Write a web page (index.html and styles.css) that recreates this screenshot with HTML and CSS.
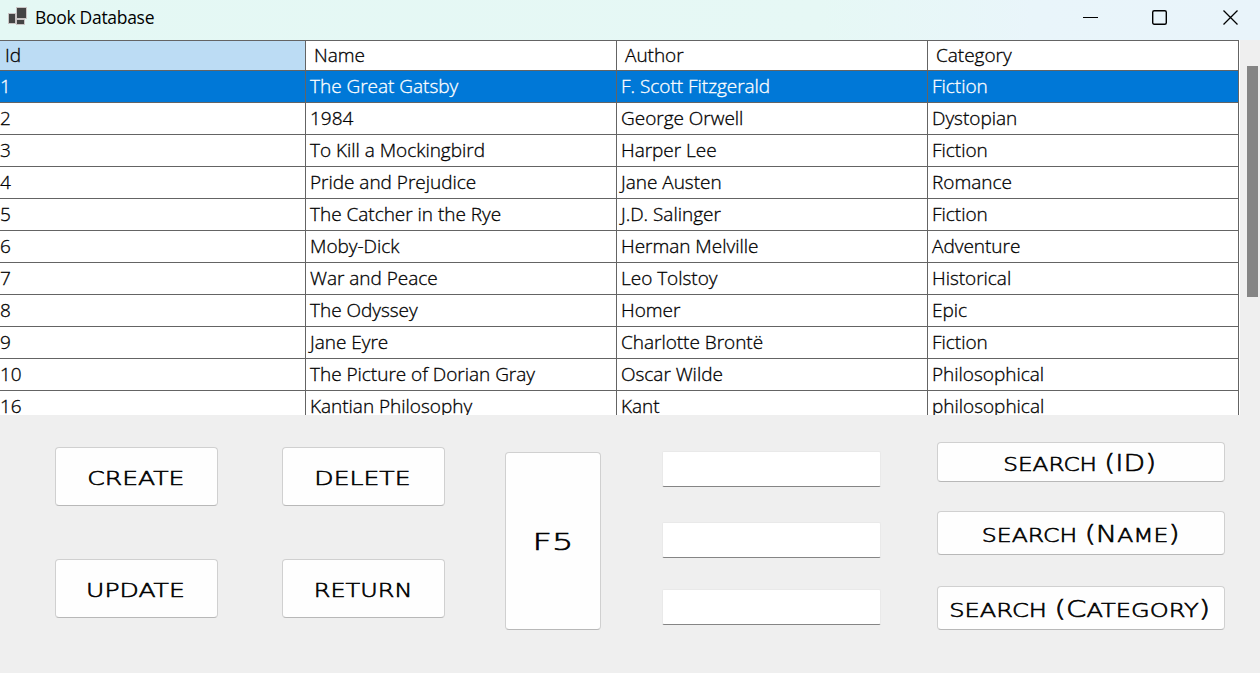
FILE: index.html
```html
<!DOCTYPE html>
<html lang="en">
<head>
<meta charset="utf-8">
<title>Book Database</title>
<link rel="stylesheet" href="styles.css">
</head>
<body>
<div class="window">
  <header class="titlebar">
    <svg class="app-icon" width="20" height="20" viewBox="0 0 20 20">
      <g fill="#444" stroke="#c9c4c4" stroke-width="1">
        <rect x="0.5" y="5.5" width="7" height="10"/>
        <rect x="8.5" y="11.500" width="8" height="5"/>
        <rect x="8.500" y="-0.5" width="10" height="11"/>
      </g>
    </svg>
    <h1 class="title">Book Database</h1>
    <div class="controls">
      <svg width="16" height="16" viewBox="0 0 16 16"><path d="M0 8.500H15" stroke="#000" fill="none"/></svg>
      <svg width="16" height="16" viewBox="0 0 16 16"><rect x="0.700" y="1.700" width="13.600" height="13.600" rx="1.500" stroke="#000" stroke-width="1.400" fill="none"/></svg>
      <svg width="16" height="16" viewBox="0 0 16 16"><path d="M0.500 1.500L14.500 15.500M14.500 1.500L0.500 15.500" stroke="#000" stroke-width="1.300" fill="none"/></svg>
    </div>
  </header>

  <main class="grid-area">
    <div class="table">
      <div class="row head"><div class="active">Id</div><div>Name</div><div>Author</div><div>Category</div></div>
      <div class="row selected"><div>1</div><div>The Great Gatsby</div><div>F. Scott Fitzgerald</div><div>Fiction</div></div>
      <div class="row"><div>2</div><div>1984</div><div>George Orwell</div><div>Dystopian</div></div>
      <div class="row"><div>3</div><div>To Kill a Mockingbird</div><div>Harper Lee</div><div>Fiction</div></div>
      <div class="row"><div>4</div><div>Pride and Prejudice</div><div>Jane Austen</div><div>Romance</div></div>
      <div class="row"><div>5</div><div>The Catcher in the Rye</div><div>J.D. Salinger</div><div>Fiction</div></div>
      <div class="row"><div>6</div><div>Moby-Dick</div><div>Herman Melville</div><div>Adventure</div></div>
      <div class="row"><div>7</div><div>War and Peace</div><div>Leo Tolstoy</div><div>Historical</div></div>
      <div class="row"><div>8</div><div>The Odyssey</div><div>Homer</div><div>Epic</div></div>
      <div class="row"><div>9</div><div>Jane Eyre</div><div>Charlotte Brontë</div><div>Fiction</div></div>
      <div class="row"><div>10</div><div>The Picture of Dorian Gray</div><div>Oscar Wilde</div><div>Philosophical</div></div>
      <div class="row"><div>16</div><div>Kantian Philosophy</div><div>Kant</div><div>philosophical</div></div>
    </div>
    <div class="scrollbar"><div class="thumb"></div></div>
  </main>

  <section class="panel">
    <div class="actions">
      <button class="btn"><span class="label wide">CREATE</span></button>
      <button class="btn"><span class="label wide">DELETE</span></button>
      <button class="btn"><span class="label wide">UPDATE</span></button>
      <button class="btn"><span class="label">RETURN</span></button>
    </div>
    <button class="btn refresh"><span class="label wide big">F5</span></button>
    <div class="fields">
      <input class="field" type="text" aria-label="Id">
      <input class="field" type="text" aria-label="Name">
      <input class="field" type="text" aria-label="Category">
    </div>
    <div class="searches">
      <button class="btn by-id"><span class="label">SEARCH <span class="big">(ID)</span></span></button>
      <button class="btn by-name"><span class="label">SEARCH <span class="big">(N</span>AME<span class="big">)</span></span></button>
      <button class="btn by-category"><span class="label">SEARCH <span class="big">(C</span>ATEGORY<span class="big">)</span></span></button>
    </div>
  </section>
</div>
</body>
</html>
```

FILE: styles.css
```css
* { box-sizing: border-box; }

body {
  margin: 0;
  background: #efefef;
  color: #000;
  font-family: "Open Sans", "Noto Sans", sans-serif;
}

.window {
  width: 1260px;
  height: 673px;
  overflow: hidden;
  display: flex;
  flex-direction: column;
}

.titlebar {
  height: 40px;
  flex: none;
  display: flex;
  align-items: center;
  padding: 0 21px 4px 8px;
  background: linear-gradient(90deg, #e4f8f4 0%, #e6f8f5 65%, #e9f5fa 82%, #e9f4fa 100%);
}

.app-icon { overflow: visible; }

.title {
  margin: -2px 0 0 7px;
  font-size: 17.5px;
  font-weight: 400;
  letter-spacing: -0.3px;
  line-height: 24px;
}

.controls {
  margin: -2px 0 0 auto;
  display: flex;
  gap: 53px;
}
.controls svg:last-child { margin-left: 2px; }

.grid-area {
  height: 375px;
  flex: none;
  display: flex;
  overflow: hidden;
}

.table {
  width: 1240px;
  background: linear-gradient(#646464, #646464) 0 0 / 1239px 1px no-repeat #fff;
  padding-top: 1px;
}

.row {
  display: grid;
  grid-template-columns: 306px 311px 311px 311px;
  width: 1239px;
  height: 32px;
}

.row > div {
  border-right: 1px solid #646464;
  border-bottom: 1px solid #646464;
  padding-left: 4px;
  font-size: 19px;
  font-weight: 300;
  line-height: 31px;
  letter-spacing: -0.02px;
  -webkit-text-stroke: 0.3px currentColor;
  white-space: nowrap;
}

.row > div:first-child { padding-left: 0; }

.head { height: 30px; }
.row.head > div { padding-left: 8px; line-height: 29px; }
.row.head > .active { padding-left: 5px; background: #bcdcf4; }

.selected { background: #0078d7; color: #fff; }

.scrollbar { width: 20px; padding: 26px 2px 0 7px; }
.thumb { width: 11px; height: 231px; background: #858585; }

.panel {
  flex: 1;
  display: flex;
  align-items: flex-start;
  padding: 27px 35px 0 55px;
}

.actions {
  display: grid;
  grid-template-columns: 163px 163px;
  grid-auto-rows: 59px;
  gap: 53px 64px;
  margin-top: 5px;
}

.btn {
  display: flex;
  align-items: center;
  justify-content: center;
  padding: 0;
  border: 1px solid #d0d0d0;
  border-bottom-color: #b8b8b8;
  border-radius: 4px;
  background: #fefefe;
  color: #000;
  font-family: "DejaVu Sans", sans-serif;
  white-space: nowrap;
}

.label {
  display: block;
  font-size: 19px;
  font-weight: 200;
  line-height: 24px;
  transform: scaleX(1.26);
  padding-top: 2px;
  -webkit-text-stroke: 0.6px #000;
}
.wide { transform: translateX(-1px) scaleX(1.32); }

.big { font-size: 23px; }

.refresh { width: 96px; height: 178px; margin: 10px 0 0 60px; }
.refresh .label { transform: scaleX(1.46); }

.by-id .label { transform: translateX(-1px) scaleX(1.22); }
.by-name .label { transform: scaleX(1.24); }
.by-category .label { transform: translateX(-1px) scaleX(1.27); }

.fields {
  display: flex;
  flex-direction: column;
  margin: 9px 0 0 61px;
}

.field {
  width: 219px;
  height: 36px;
  padding: 0 6px;
  border: 1px solid #e9e9e9;
  border-bottom-color: #858585;
  border-radius: 2px;
  background: #fff;
  font: 19px "Open Sans", sans-serif;
}
.field:nth-child(2) { margin-top: 35px; }
.field:nth-child(3) { margin-top: 31px; }

.searches {
  display: flex;
  flex-direction: column;
  width: 288px;
  margin-left: auto;
}
.by-id { height: 40px; }
.by-name { height: 44px; margin-top: 29px; }
.by-category { height: 44px; margin-top: 31px; }
```
